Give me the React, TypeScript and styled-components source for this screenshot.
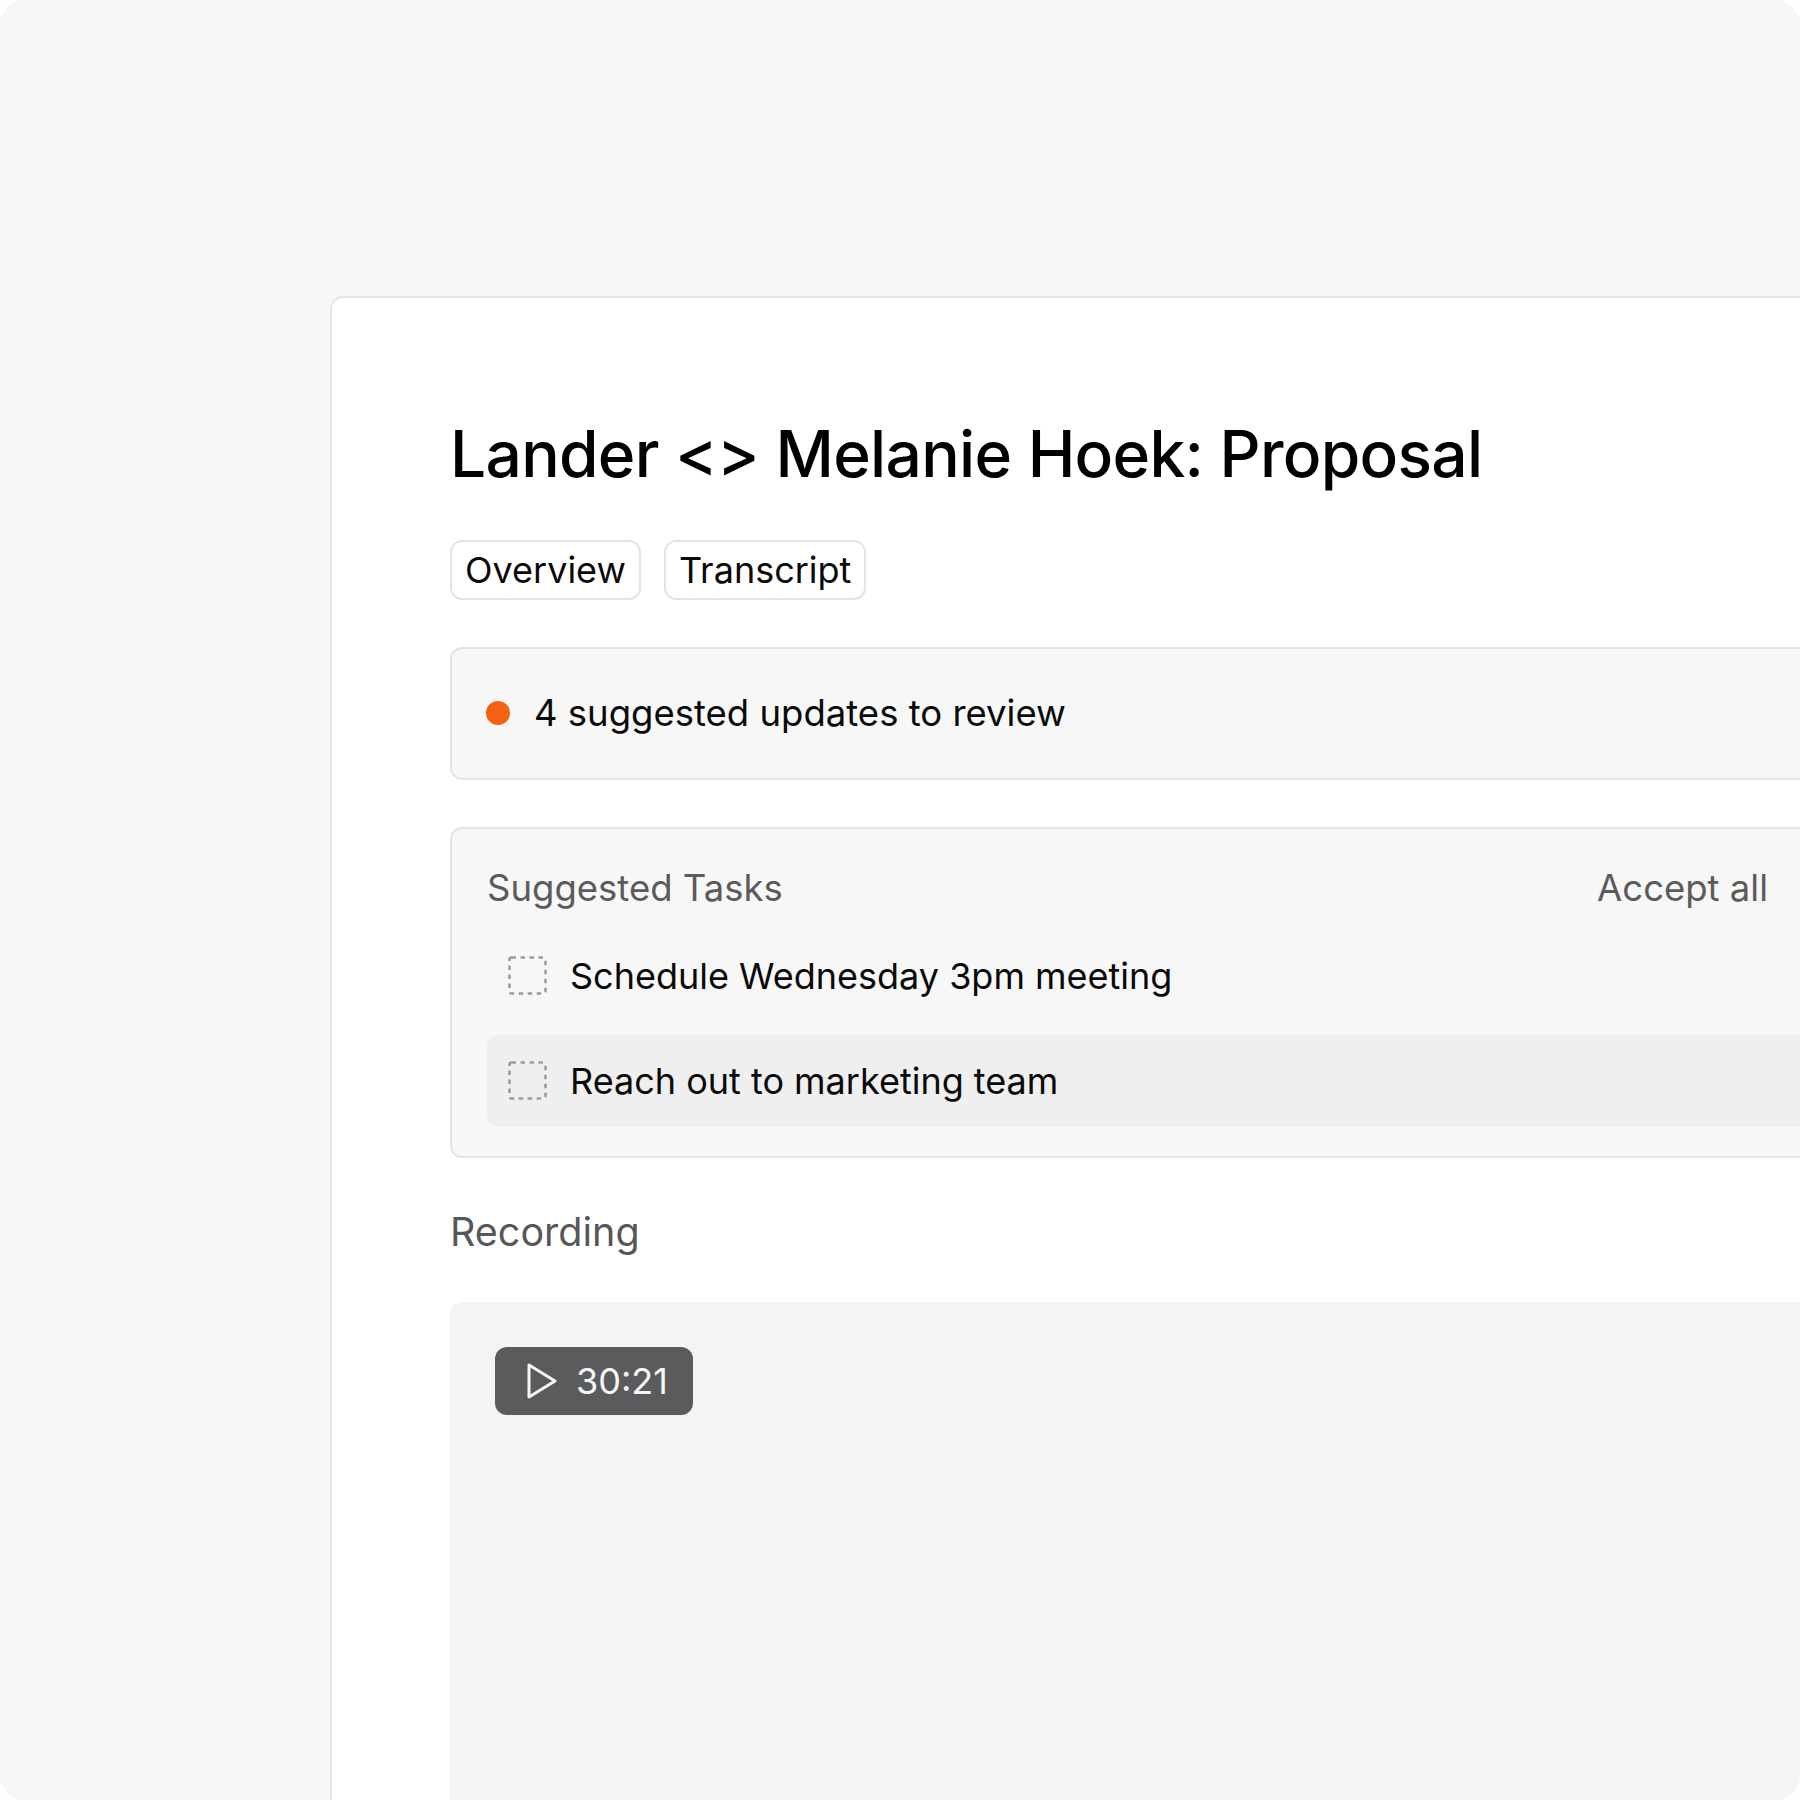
import React from "react";
import styled, { createGlobalStyle } from "styled-components";

const Global = createGlobalStyle`
  html, body {
    margin: 0;
    padding: 0;
    background: #ffffff;
  }
  body {
    font-family: Inter, "Noto Sans", "Liberation Sans", sans-serif;
    -webkit-font-smoothing: antialiased;
  }
  * { box-sizing: border-box; }
`;

const Frame = styled.div`
  width: 1800px;
  height: 1800px;
  background: #f7f7f7;
  border-radius: 24px;
  overflow: hidden;
  padding: 296px 0 0 330px;
`;

const Card = styled.div`
  width: 1660px;
  min-height: 1700px;
  background: #ffffff;
  border: 2px solid #e4e4e4;
  border-radius: 13px;
  padding: 118px 118px 0 118px;
  display: flex;
  flex-direction: column;
`;

const Title = styled.h1`
  margin: 0;
  font-size: 64px;
  line-height: 76.8px;
  font-weight: 500;
  color: #000000;
  letter-spacing: -0.7px;
`;

const Tabs = styled.div`
  display: flex;
  gap: 23px;
  margin-top: 47px;
`;

const Tab = styled.button`
  font-family: inherit;
  font-size: 36px;
  line-height: 42px;
  color: #0a0a0a;
  background: #ffffff;
  border: 2px solid #e4e4e4;
  border-radius: 12px;
  padding: 7px 13px;
  height: 60px;
  cursor: pointer;
`;

const Alert = styled.div`
  margin-top: 47px;
  display: flex;
  align-items: center;
  gap: 24px;
  height: 133px;
  padding: 0 34px;
  background: #f7f7f7;
  border: 2px solid #e4e4e4;
  border-radius: 12px;
  font-size: 36.5px;
  color: #0a0a0a;
`;

const Dot = styled.span`
  width: 24px;
  height: 24px;
  border-radius: 50%;
  background: #f26114;
  flex-shrink: 0;
`;

const TasksBox = styled.div`
  margin-top: 47px;
  background: #f7f7f7;
  border: 2px solid #e4e4e4;
  border-radius: 12px;
  padding: 38px 35px 29px 35px;
  display: flex;
  flex-direction: column;
`;

const TasksHeader = styled.div`
  display: flex;
  justify-content: space-between;
  align-items: center;
  padding-right: 65px;
  font-size: 36.5px;
  line-height: 42px;
  color: #5b5b5b;
`;

const TaskList = styled.div`
  display: flex;
  flex-direction: column;
  gap: 13px;
  margin-top: 21px;
`;

const TaskRow = styled.div<{ $active?: boolean }>`
  display: flex;
  align-items: center;
  gap: 23px;
  height: 92px;
  padding: 0 21px;
  border-radius: 10px;
  background: ${(p) => (p.$active ? "#efefef" : "transparent")};
  font-size: 36px;
  color: #0a0a0a;
`;

const SectionLabel = styled.div`
  margin-top: 50px;
  font-size: 39.5px;
  line-height: 48px;
  color: #575757;
`;

const RecordingBox = styled.div`
  margin-top: 46px;
  height: 700px;
  background: #f4f4f4;
  border-radius: 13px;
  padding: 45px;
`;

const PlayBadge = styled.div`
  display: inline-flex;
  align-items: center;
  gap: 19px;
  height: 68px;
  padding: 0 25px 0 32px;
  background: #5b5b5d;
  border-radius: 12px;
  color: #f6f6f6;
  font-size: 36px;
`;

const DashedBox = () => (
  <svg width="39" height="39" viewBox="0 0 39 39" style={{ flexShrink: 0 }}>
    <rect
      x="1.5"
      y="1.5"
      width="36"
      height="36"
      rx="2"
      fill="none"
      stroke="#9c9c9c"
      strokeWidth="2.6"
      strokeDasharray="4.5 4.5"
    />
  </svg>
);

const PlayIcon = () => (
  <svg width="30" height="36" viewBox="0 0 30 36" style={{ flexShrink: 0 }}>
    <polygon
      points="2,2 28,18 2,34"
      fill="none"
      stroke="#f6f6f6"
      strokeWidth="3"
      strokeLinejoin="round"
    />
  </svg>
);

export default function App() {
  return (
    <>
      <Global />
      <Frame>
        <Card>
          <Title>Lander &lt;&gt; Melanie Hoek: Proposal</Title>
          <Tabs>
            <Tab>Overview</Tab>
            <Tab>Transcript</Tab>
          </Tabs>
          <Alert>
            <Dot />
            <span>4 suggested updates to review</span>
          </Alert>
          <TasksBox>
            <TasksHeader>
              <span>Suggested Tasks</span>
              <span>Accept all</span>
            </TasksHeader>
            <TaskList>
              <TaskRow>
                <DashedBox />
                <span>Schedule Wednesday 3pm meeting</span>
              </TaskRow>
              <TaskRow $active>
                <DashedBox />
                <span>Reach out to marketing team</span>
              </TaskRow>
            </TaskList>
          </TasksBox>
          <SectionLabel>Recording</SectionLabel>
          <RecordingBox>
            <PlayBadge>
              <PlayIcon />
              <span>30:21</span>
            </PlayBadge>
          </RecordingBox>
        </Card>
      </Frame>
    </>
  );
}
